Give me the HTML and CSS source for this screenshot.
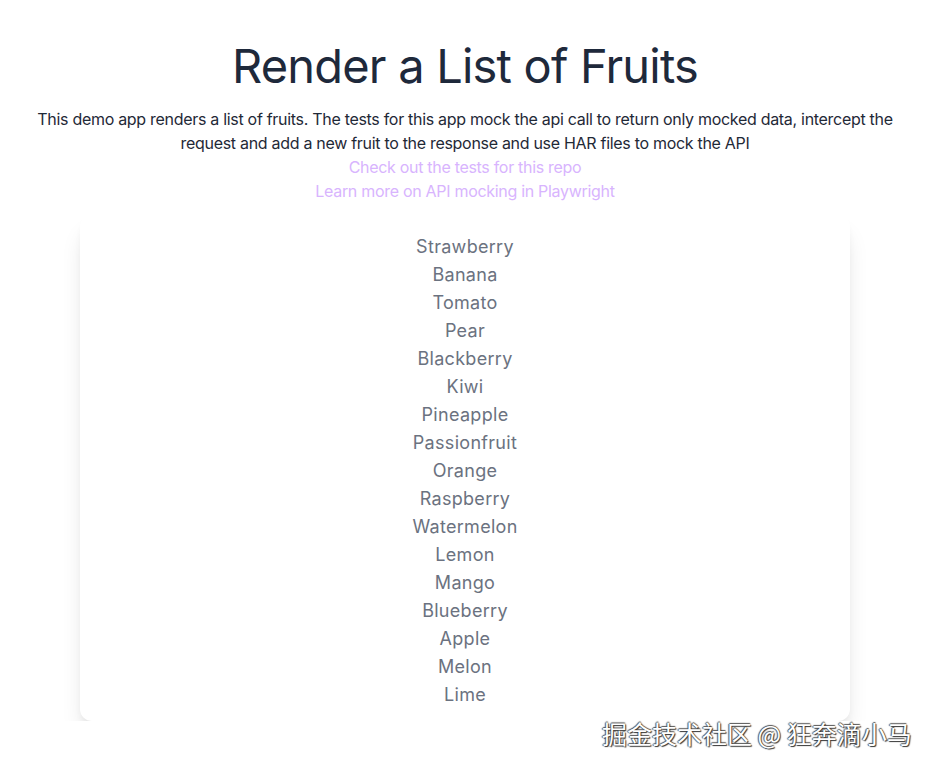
FILE: index.html
```html
<!DOCTYPE html>
<html lang="en">
<head>
    <meta charset="UTF-8">
    <meta name="viewport" content="width=device-width, initial-scale=1.0">
    <title>Render a List of Fruits</title>
    <link rel="stylesheet" href="styles.css">
</head>
<body>
    <div class="page">
        <h1>Render a List of Fruits</h1>
        <p class="intro">This demo app renders a list of fruits. The tests for this app mock the api call to return only mocked data, intercept the request and add a new fruit to the response and use HAR files to mock the API</p>
        <a class="link" href="#">Check out the tests for this repo</a>
        <a class="link" href="#">Learn more on API mocking in Playwright</a>

        <ul class="card">
            <li>Strawberry</li>
            <li>Banana</li>
            <li>Tomato</li>
            <li>Pear</li>
            <li>Blackberry</li>
            <li>Kiwi</li>
            <li>Pineapple</li>
            <li>Passionfruit</li>
            <li>Orange</li>
            <li>Raspberry</li>
            <li>Watermelon</li>
            <li>Lemon</li>
            <li>Mango</li>
            <li>Blueberry</li>
            <li>Apple</li>
            <li>Melon</li>
            <li>Lime</li>
        </ul>
    </div>

    <div class="watermark">掘金技术社区 @ 狂奔滴小马</div>
</body>
</html>
```

FILE: styles.css
```css
body {
    margin: 0;
    font-family: Inter, "Noto Sans", sans-serif;
    background: #fff;
    color: #1f2937;
}

.page {
    display: flex;
    flex-direction: column;
    align-items: center;
    text-align: center;
    padding: 40px 3px 0 0;
}

h1 {
    margin: 0;
    font-size: 47px;
    line-height: 52px;
    font-weight: 400;
    color: #1e293b;
    letter-spacing: -0.8px;
}

.intro {
    margin: 15px 30px 0;
    font-size: 16px;
    line-height: 24px;
    letter-spacing: -0.3px;
}

.link {
    display: block;
    font-size: 16px;
    line-height: 24px;
    color: #d8b4fe;
    text-decoration: none;
    letter-spacing: -0.3px;
}

.card {
    list-style: none;
    box-sizing: border-box;
    width: 770px;
    margin: 12px 0 0;
    padding: 18px 0 12px;
    background: #fff;
    border-radius: 12px;
    box-shadow: 0 16px 24px -6px rgba(0, 0, 0, 0.14), 0 6px 10px -4px rgba(0, 0, 0, 0.08);
}

.card li {
    font-size: 18px;
    line-height: 28px;
    color: #6b7280;
    letter-spacing: 0.3px;
}

.watermark {
    position: absolute;
    left: 602px;
    top: 718px;
    font-family: "Noto Sans CJK SC", sans-serif;
    font-size: 25px;
    line-height: 30px;
    color: #fff;
    text-shadow: 1px 1px 1px #333, -1px 0 1px #555, 0 -1px 1px #555;
}
```
